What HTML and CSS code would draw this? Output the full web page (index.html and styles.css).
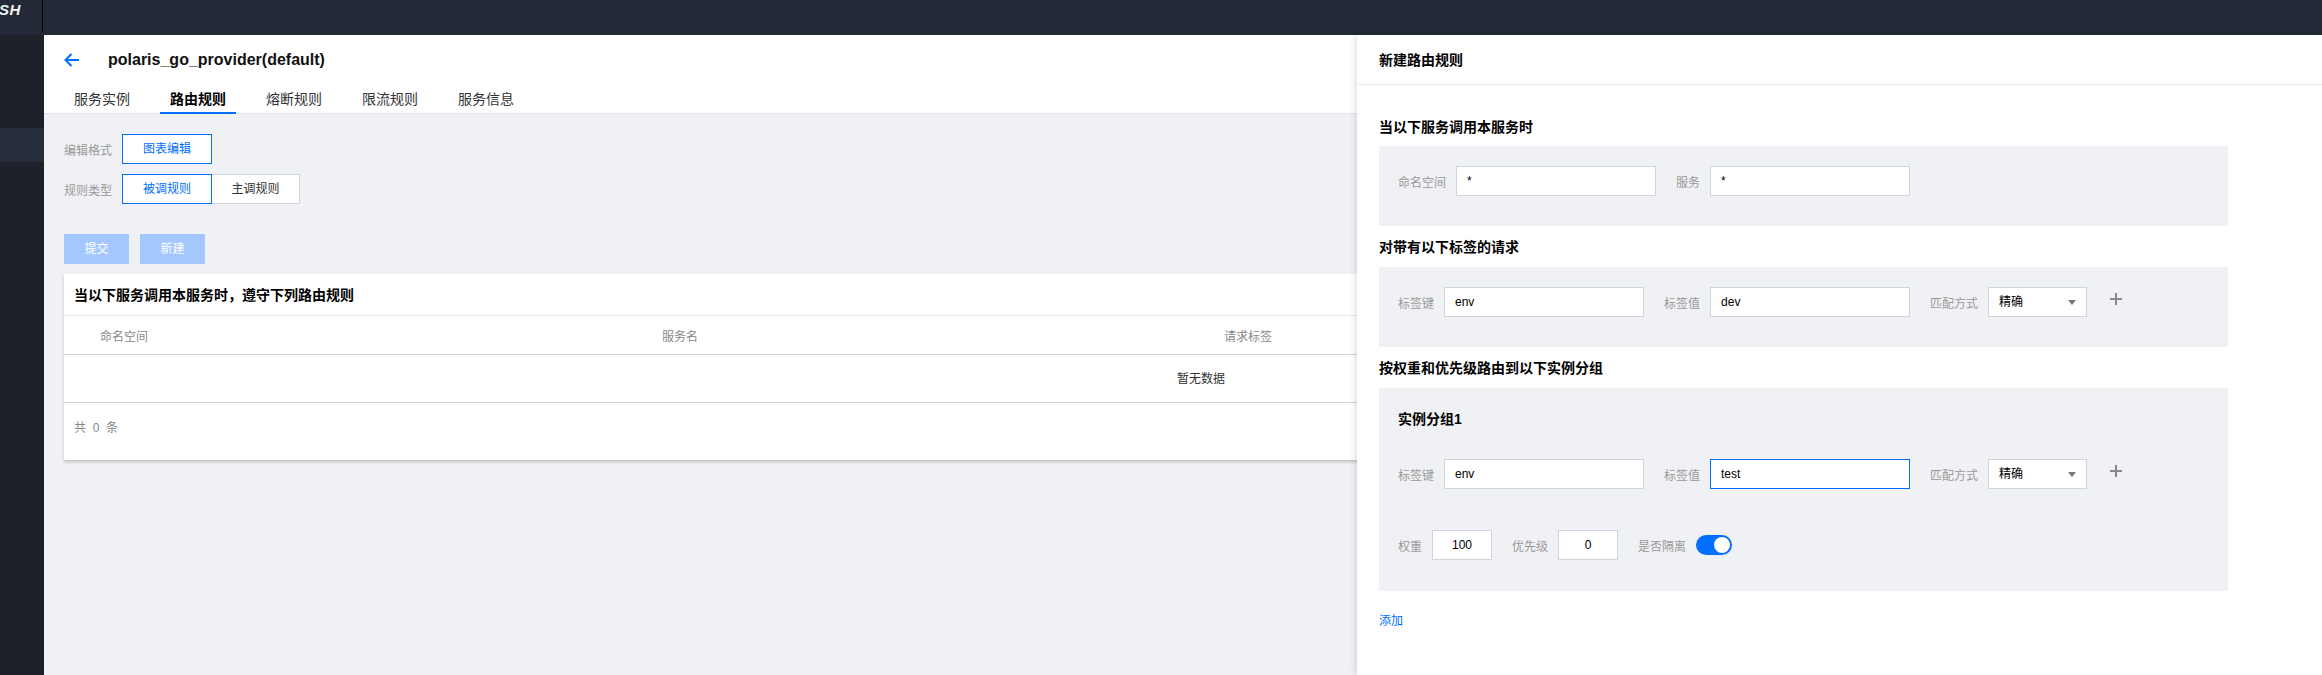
FILE: index.html
```html
<!DOCTYPE html>
<html lang="zh">
<head>
<meta charset="utf-8">
<title>路由规则</title>
<link rel="stylesheet" href="styles.css">
</head>
<body>
<div class="app">
  <header class="topbar">
    <div class="logo"><span class="logo-text">SH</span></div>
  </header>
  <div class="layout">
    <aside class="sidebar">
      <div class="side-item active"></div>
    </aside>
    <main class="main">
      <div class="page-head">
        <div class="title-row">
          <svg class="back" width="16" height="14" viewBox="0 0 16 14"><path d="M7.5 1 L1.5 7 L7.5 13 M1.5 7 H15" fill="none" stroke="#006eff" stroke-width="2"/></svg>
          <h1 class="title">polaris_go_provider(default)</h1>
        </div>
        <nav class="tabs">
          <span class="tab">服务实例</span>
          <span class="tab active">路由规则</span>
          <span class="tab">熔断规则</span>
          <span class="tab">限流规则</span>
          <span class="tab">服务信息</span>
        </nav>
      </div>
      <div class="content">
        <div class="form-row">
          <span class="form-label">编辑格式</span>
          <div class="seg"><span class="seg-btn on">图表编辑</span></div>
        </div>
        <div class="form-row">
          <span class="form-label">规则类型</span>
          <div class="seg"><span class="seg-btn on">被调规则</span><span class="seg-btn off">主调规则</span></div>
        </div>
        <div class="actions">
          <span class="btn-dis">提交</span>
          <span class="btn-dis">新建</span>
        </div>
        <div class="card">
          <div class="card-head">当以下服务调用本服务时，遵守下列路由规则</div>
          <div class="thead">
            <span class="th">命名空间</span>
            <span class="th">服务名</span>
            <span class="th">请求标签</span>
            <span class="th"></span>
          </div>
          <div class="empty">暂无数据</div>
          <div class="card-foot">共&nbsp;&nbsp;0&nbsp;&nbsp;条</div>
        </div>
      </div>
    </main>
  </div>

  <section class="drawer">
    <div class="drawer-head">新建路由规则</div>
    <div class="drawer-body">
      <h3 class="sec-title first">当以下服务调用本服务时</h3>
      <div class="box">
        <div class="row">
          <span class="lbl">命名空间</span>
          <span class="inp">*</span>
          <span class="lbl">服务</span>
          <span class="inp">*</span>
        </div>
      </div>

      <h3 class="sec-title">对带有以下标签的请求</h3>
      <div class="box">
        <div class="row">
          <span class="lbl">标签键</span>
          <span class="inp">env</span>
          <span class="lbl">标签值</span>
          <span class="inp">dev</span>
          <span class="lbl">匹配方式</span>
          <span class="sel">精确<i class="caret"></i></span>
          <svg class="plus" width="12" height="12" viewBox="0 0 12 12"><path d="M6 0 V12 M0 6 H12" stroke="#888" stroke-width="2"/></svg>
        </div>
      </div>

      <h3 class="sec-title">按权重和优先级路由到以下实例分组</h3>
      <div class="box group">
        <h4 class="group-title">实例分组1</h4>
        <div class="row">
          <span class="lbl">标签键</span>
          <span class="inp">env</span>
          <span class="lbl">标签值</span>
          <span class="inp focus">test</span>
          <span class="lbl">匹配方式</span>
          <span class="sel">精确<i class="caret"></i></span>
          <svg class="plus" width="12" height="12" viewBox="0 0 12 12"><path d="M6 0 V12 M0 6 H12" stroke="#888" stroke-width="2"/></svg>
        </div>
        <div class="row weight-row">
          <span class="lbl">权重</span>
          <span class="inp small">100</span>
          <span class="lbl">优先级</span>
          <span class="inp small">0</span>
          <span class="lbl">是否隔离</span>
          <span class="switch"><span class="knob"></span></span>
        </div>
      </div>
      <a class="add-link">添加</a>
    </div>
  </section>
</div>
</body>
</html>
```

FILE: styles.css
```css
* { box-sizing: border-box; }
html, body { margin: 0; padding: 0; }
body {
  width: 2322px;
  height: 675px;
  overflow: hidden;
  font-family: "Liberation Sans", "Noto Sans CJK SC", Arial, sans-serif;
  font-size: 12px;
  color: #000;
  background: #f0f1f4;
}
.app { position: relative; width: 2322px; height: 675px; overflow: hidden; }

.topbar {
  height: 35px;
  background: #232936;
  display: flex;
}
.logo {
  width: 43px;
  height: 32px;
  border-right: 1px solid #000;
  overflow: hidden;
  flex-shrink: 0;
}
.logo-text {
  display: block;
  margin-left: -1px;
  margin-top: 2px;
  color: #f2f2f2;
  font-weight: bold;
  font-style: italic;
  font-size: 15px;
  line-height: 16px;
  letter-spacing: 0.5px;
}

.layout { display: flex; height: 640px; }
.sidebar {
  width: 44px;
  flex: 0 0 44px;
  background: #1e212a;
  padding-top: 93px;
}
.side-item.active { height: 34px; background: #262d3b; }

.main { flex: 1 1 auto; min-width: 0; background: #f0f1f4; }
.page-head {
  height: 79px;
  background: #fff;
  border-bottom: 1px solid #e2e5ea;
  padding: 10px 0 0 20px;
}
.title-row { display: flex; align-items: center; height: 30px; }
.back { margin-right: 28px; }
.title {
  margin: 0;
  font-size: 16px;
  font-weight: bold;
  color: #111;
}
.tabs { display: flex; margin-top: 11px; }
.tab {
  font-size: 14px;
  line-height: 26px;
  height: 28px;
  padding: 0 10px;
  margin-right: 20px;
  color: #333;
  border-bottom: 2px solid transparent;
}
.tab.active { color: #000; font-weight: bold; border-bottom-color: #006eff; }

.content { padding: 20px 0 0 20px; display: flex; flex-direction: column; }
.form-row { display: flex; align-items: center; height: 30px; margin-bottom: 10px; }
.form-label { width: 58px; color: #999; }
.seg { display: flex; }
.seg-btn {
  height: 30px;
  line-height: 28px;
  text-align: center;
  background: #fff;
}
.seg-btn.on { width: 90px; border: 1px solid #006eff; color: #006eff; }
.seg-btn.off { width: 88px; border: 1px solid #cfd5de; border-left: none; color: #333; }

.actions { display: flex; gap: 11px; margin-top: 20px; }
.btn-dis {
  width: 65px;
  height: 30px;
  line-height: 30px;
  text-align: center;
  background: #a3c8ff;
  color: #fff;
}

.card {
  margin-top: 10px;
  margin-right: 20px;
  background: #fff;
  box-shadow: 0 2px 3px rgba(0, 0, 0, 0.2);
}
.card-head {
  height: 42px;
  line-height: 42px;
  padding-left: 10px;
  font-size: 14px;
  font-weight: bold;
  border-bottom: 1px solid #e5e8ed;
}
.thead {
  display: grid;
  grid-template-columns: repeat(4, 562px);
  padding-left: 20px;
  height: 39px;
  align-items: center;
  border-bottom: 1px solid #cfd5de;
  overflow: hidden;
}
.th { padding-left: 16px; color: #888; }
.empty {
  height: 48px;
  line-height: 48px;
  text-align: center;
  padding-left: 36px;
  border-bottom: 1px solid #cfd5de;
  color: #333;
}
.card-foot {
  height: 57px;
  padding: 17px 0 0 10px;
  color: #888;
  line-height: 16px;
}

.drawer {
  position: absolute;
  top: 35px;
  right: 0;
  bottom: 0;
  width: 965px;
  background: #fff;
  box-shadow: -2px 0 6px rgba(0, 0, 0, 0.12);
}
.drawer-head {
  height: 50px;
  line-height: 50px;
  padding-left: 22px;
  font-size: 14px;
  font-weight: bold;
  border-bottom: 1px solid #e5e8ed;
}
.drawer-body { padding: 0 22px; }
.sec-title {
  margin: 11px 0 10px;
  height: 20px;
  line-height: 20px;
  font-size: 14px;
  font-weight: bold;
}
.sec-title.first { margin-top: 32px; margin-bottom: 9px; }
.box {
  width: 849px;
  background: #f0f1f4;
  padding: 20px 19px 30px;
}
.box.group { padding: 21px 19px 31px; }
.group-title {
  margin: 0 0 30px;
  height: 20px;
  line-height: 20px;
  font-size: 14px;
  font-weight: bold;
}
.row { display: flex; align-items: center; height: 30px; }
.weight-row { margin-top: 41px; }
.lbl { color: #999; margin-right: 10px; }
.inp {
  width: 200px;
  height: 30px;
  line-height: 28px;
  padding: 0 10px;
  background: #fff;
  border: 1px solid #cfd5de;
  margin-right: 20px;
  color: #000;
}
.inp.focus { border-color: #006eff; }
.inp.small { width: 60px; text-align: center; padding: 0; }
.sel {
  position: relative;
  width: 99px;
  height: 30px;
  line-height: 28px;
  padding: 0 10px;
  background: #fff;
  border: 1px solid #cfd5de;
  margin-right: 23px;
}
.caret {
  position: absolute;
  right: 10px;
  top: 12px;
  width: 0;
  height: 0;
  border-left: 4px solid transparent;
  border-right: 4px solid transparent;
  border-top: 5px solid #777;
}
.plus { margin-top: -6px; }
.switch {
  position: relative;
  width: 36px;
  height: 20px;
  border-radius: 10px;
  background: #006eff;
}
.knob {
  position: absolute;
  right: 2px;
  top: 2px;
  width: 16px;
  height: 16px;
  border-radius: 50%;
  background: #fff;
}
.add-link {
  display: block;
  margin-top: 20px;
  line-height: 20px;
  color: #006eff;
}
```
